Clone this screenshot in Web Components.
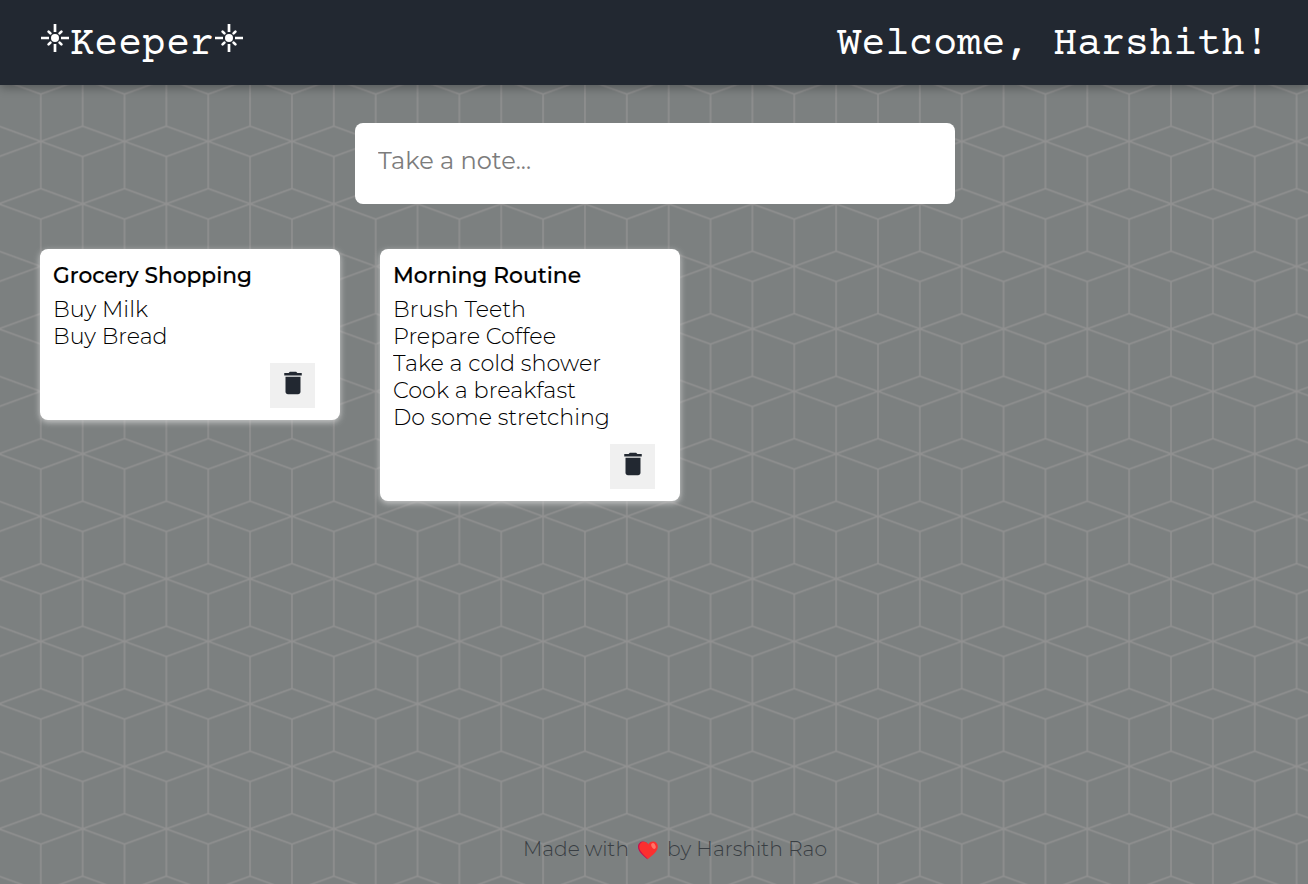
<!DOCTYPE html>
<html lang="en">
<head>
<meta charset="utf-8">
<title>Keeper</title>
<style>
html,body{margin:0;height:100%}
body{font-family:Montserrat,Inter,"Open Sans",sans-serif;overflow:hidden}
</style>
</head>
<body>
<keeper-app></keeper-app>
<script>
const define=(name,html,setup)=>customElements.define(name,class extends HTMLElement{
  constructor(){super();this.attachShadow({mode:'open'}).innerHTML=html;}
  connectedCallback(){if(setup)setup(this);}
});

// Stretches its text horizontally to a given advance width.
define('fit-text',`<style>:host{display:block;white-space:nowrap}span{display:inline-block;transform-origin:0 50%}</style><span><slot></slot></span>`,
 el=>{const s=el.shadowRoot.querySelector('span');const w=s.offsetWidth?s.getBoundingClientRect().width:0;
  const t=+el.getAttribute('width');if(w)s.style.transform=`scaleX(${t/w})`;el.style.width=t+'px';});

define('sun-icon',`<style>:host{display:block;width:28px;height:28px}svg{display:block}</style>
<svg width="28" height="28" viewBox="0 0 28 28" fill="none" stroke="#fff" stroke-width="2.700"><circle cx="14" cy="14" r="4" fill="#fff" stroke="none"/><path d="M14 0v8M14 20v8M0 14h8M20 14h8"/><path stroke-linecap="round" d="M7.600 7.600l1.800 1.800M18.600 18.600l1.800 1.800M20.400 7.600l-1.800 1.800M9.400 18.600l-1.800 1.800"/></svg>`);

define('heart-icon',`<style>:host{display:block;width:20px;height:19px}svg{display:block}</style>
<svg width="20" height="19" viewBox="0 0 20 19"><path fill="#c50f4f" d="M9.600 18.400C5 14.500 0 11 0 5.800C0 2.500 2.300.5 5 .5c2.200 0 3.800 1 4.800 2.800z"/><path fill="#fb2f2f" d="M10 17.900C6 14 1.200 10.500 1.200 5.800c0-3 2-5 4.500-5 2 0 3.500 1 4.500 2.800C11.200 1.600 12.900.6 15 .6c2.800 0 4.800 2.200 4.800 5.200 0 4.700-5.300 8.400-9.800 12.100z"/><ellipse cx="15.500" cy="5" rx="2" ry="3" transform="rotate(-25 15.500 5)" fill="#ff7568"/></svg>`);

define('page-header',`<style>
:host{display:flex;flex:none;position:relative;box-sizing:border-box;height:85px;padding:0 39px 0 41px;justify-content:space-between;align-items:flex-start;background:#222831;color:#fff;box-shadow:0 3px 9px rgba(0,0,0,.3);font:40px/45px "Courier Prime","Courier New","Liberation Mono",monospace}
.brand{display:flex;padding-top:19px}.brand sun-icon{margin-top:5px}.name{margin:4px 1px 0 1px}.hello{padding-top:23px;white-space:pre}
</style><div class="brand"><sun-icon></sun-icon><span class="name">Keeper</span><sun-icon></sun-icon></div><div class="hello"><slot></slot></div>`);

define('note-input',`<style>
:host{display:block;box-sizing:border-box;width:600px;height:81px;margin:38px auto 0;position:relative;left:1px;padding:23px 23px;border-radius:8px;background:#fff;color:#7c7c7c;font-size:24px;line-height:30px;font-weight:400}
</style><fit-text width="153">Take a note...</fit-text>`);

define('trash-button',`<style>
:host{display:flex;width:45px;height:45px;background:#f0f0f0;justify-content:center}svg{display:block;margin-top:5px}
</style><svg width="30" height="30" viewBox="0 0 24 24" fill="#222831"><path d="M6 19c0 1.100.9 2 2 2h8c1.100 0 2-.9 2-2V7H6v12zM19 4h-3.500l-1-1h-5l-1 1H5v2h14V4z"/></svg>`);

define('note-card',`<style>
:host{display:flex;flex-direction:column;box-sizing:border-box;width:300px;padding:13px 13px 12px 12.500px;background:#fff;color:#000;border-radius:8px;box-shadow:0 2px 6px #ccc;font-size:22px;line-height:27px;font-weight:300}
.title{font-weight:500;margin-bottom:7px;-webkit-text-stroke:.2px #000}trash-button{align-self:flex-end;margin:13px 12px 0 0}
</style><div class="title"><slot name="title"></slot></div><slot></slot><trash-button></trash-button>`);

define('page-footer',`<style>
:host{display:flex;position:relative;height:24px;margin:auto 0 23px 522.500px;font-size:20px;line-height:24px;font-weight:300;color:#393e43}
heart-icon{margin:4px 9px 0}
</style><fit-text width="106">Made with</fit-text><heart-icon></heart-icon><fit-text width="160">by Harshith Rao</fit-text>`);

define('cube-backdrop',`<style>:host{display:block;position:absolute;inset:0;z-index:-1}svg{display:block}</style>
<svg width="100%" height="100%"><defs><pattern id="cubes" x="40.800" y="16.400" width="83.720" height="125" patternUnits="userSpaceOnUse">
<path fill="none" stroke="#919191" stroke-width="1.500" d="M0 0L41.860 15.200L83.720 0M0 125L41.860 109.800L83.720 125M0 47.300L41.860 62.500L83.720 47.300M0 77.700L41.860 62.500L83.720 77.700M0 0V47.300M83.720 0V47.300M0 77.700V125M83.720 77.700V125M41.860 15.200V109.800"/></pattern></defs><rect width="100%" height="100%" fill="#7c8080"/><rect width="100%" height="100%" fill="url(#cubes)"/></svg>`);

define('keeper-app',`<style>
:host{display:flex;flex-direction:column;height:100vh;position:relative;z-index:0;overflow:hidden}
.notes{display:flex;align-items:flex-start;gap:40px;padding:45px 40px 0}
</style><cube-backdrop></cube-backdrop><page-header>Welcome, Harshith!</page-header><note-input></note-input>
<div class="notes">
<note-card><fit-text slot="title" width="199">Grocery Shopping</fit-text><fit-text width="95">Buy Milk</fit-text><fit-text width="114.500">Buy Bread</fit-text></note-card>
<note-card><fit-text slot="title" width="188">Morning Routine</fit-text><fit-text width="133">Brush Teeth</fit-text><fit-text width="163">Prepare Coffee</fit-text><fit-text width="208">Take a cold shower</fit-text><fit-text width="183">Cook a breakfast</fit-text><fit-text width="217">Do some stretching</fit-text></note-card>
</div><page-footer></page-footer>`);
</script>
</body>
</html>
